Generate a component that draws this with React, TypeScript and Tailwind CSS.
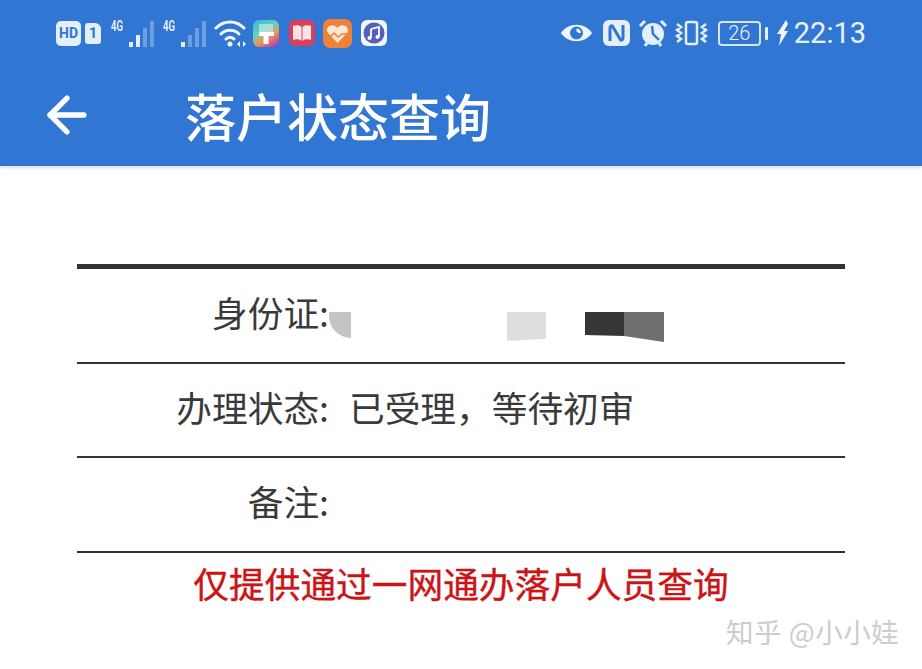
import { ArrowLeft } from 'lucide-react';

const cjk = "font-['Noto_Sans_CJK_SC','Noto_Sans',sans-serif]";

function SignalBars({ lit }: { lit: number }) {
  const heights = [5, 12, 19, 26];
  return (
    <div className="flex items-end gap-[3px] h-[26px]">
      {heights.map((h, i) => (
        <div
          key={i}
          className={i < lit ? 'w-[4px] bg-[#e3effb]' : 'w-[4px] bg-[#6d9fe0]'}
          style={{ height: h }}
        />
      ))}
    </div>
  );
}

function Signal({ lit }: { lit: number }) {
  return (
    <div className="w-[43px] h-[27px] flex items-end justify-between">
      <span className="self-start w-[15px] text-[14px] leading-[13px] font-bold text-[#e3effb] font-['Roboto',sans-serif] scale-x-[0.7] origin-left whitespace-nowrap">4G</span>
      <SignalBars lit={lit} />
    </div>
  );
}

function StatusLeft() {
  return (
    <div className="flex items-center">
      <div className="w-[25px] h-[25px] rounded-[5px] bg-[#e3effb] text-[#3176d2] text-[14px] leading-[25px] text-center font-bold font-['Roboto',sans-serif]">HD</div>
      <div className="ml-[4px] w-[16px] h-[21px] rounded-[3px] rounded-tr-[6px] bg-[#e3effb] text-[#3176d2] text-[15px] leading-[21px] text-center font-bold font-['Roboto',sans-serif]">1</div>
      <div className="ml-[10px]"><Signal lit={2} /></div>
      <div className="ml-[9px]"><Signal lit={1} /></div>
      <svg className="ml-[8px]" width="34" height="28" viewBox="0 0 34 28" fill="none" stroke="#eef5fc" strokeWidth="3" strokeLinecap="round">
        <path d="M2 9c8-8 20-8 28 0" />
        <path d="M7 15c5-5 13-5 18 0" />
        <path d="M12 20c2.500-2 5.500-2 8 0" />
        <circle cx="16" cy="25" r="2.500" fill="#eef5fc" stroke="none" />
        <path d="M26 22l-3 3 3 3zM29 22l3 3-3 3z" fill="#eef5fc" stroke="none" />
      </svg>
      {/* brush app */}
      <svg className="ml-[5px]" width="26" height="27" viewBox="0 0 26 27">
        <defs>
          <linearGradient id="brush" x1="0.2" y1="0" x2="0.8" y2="1">
            <stop offset="0" stopColor="#3fb8e0" />
            <stop offset="0.4" stopColor="#6fd0b0" />
            <stop offset="0.65" stopColor="#f0954c" />
            <stop offset="1" stopColor="#b33bc0" />
          </linearGradient>
        </defs>
        <rect width="26" height="27" rx="6" fill="url(#brush)" />
        <path d="M6 4h14v10H6z" fill="#dff3f7" opacity="0.55" />
        <path d="M6 12h15v4h-5.500v8h-5v-8H6z" fill="#fff" />
      </svg>
      {/* book app */}
      <svg className="ml-[10px]" width="26" height="26" viewBox="0 0 26 26">
        <rect width="26" height="26" rx="6" fill="#d8405c" />
        <path d="M4 6c3-1 7-1 8.500 1v14C11 19 7 19 4 20zM22 6c-3-1-7-1-8.500 1v14c1.500-2 5.500-2 8.500-1z" fill="#fbe3e6" />
      </svg>
      {/* health app */}
      <svg className="ml-[8px]" width="29" height="29" viewBox="0 0 29 29">
        <rect width="29" height="29" rx="7" fill="#ee8238" />
        <path d="M14.500 24L5 14c-4-6 5-11 9.500-5 4.500-6 13.500-1 9.500 5z" fill="#fde8d4" />
        <path d="M0 17h8l3-3 4 4 4-3h10" fill="none" stroke="#ee8238" strokeWidth="1.500" />
      </svg>
      {/* music app */}
      <svg className="ml-[9px]" width="26" height="26" viewBox="0 0 26 26">
        <rect width="26" height="26" rx="6" fill="#f2f5fb" />
        <circle cx="13" cy="13" r="10.500" fill="#5560bd" />
        <path d="M10 9l8-2v10" fill="none" stroke="#fff" strokeWidth="1.800" />
        <path d="M10 9v9" fill="none" stroke="#fff" strokeWidth="1.800" />
        <circle cx="8.500" cy="18" r="2" fill="#fff" />
        <circle cx="16.500" cy="17" r="2" fill="#fff" />
      </svg>
    </div>
  );
}

function StatusRight() {
  return (
    <div className="flex items-center">
      <svg width="33" height="22" viewBox="0 0 33 22">
        <path d="M1 11C8 0 25 0 32 11 25 22 8 22 1 11z" fill="#eef5fc" />
        <circle cx="16.500" cy="11" r="6.500" fill="#3176d2" />
        <path d="M16.500 6.500a4.500 4.500 0 0 1 4.500 4.500h-3a1.500 1.500 0 0 0-1.500-1.500z" fill="#eef5fc" />
      </svg>
      <svg className="ml-[10px]" width="27" height="26" viewBox="0 0 27 26">
        <rect width="27" height="26" rx="6" fill="#e3effb" />
        <path d="M7 21V8c0-2 2-3 3-1l7 12c1 2 3 1 3-1V5" fill="none" stroke="#3176d2" strokeWidth="3" />
      </svg>
      <svg className="ml-[8px]" width="30" height="30" viewBox="0 0 30 30">
        <circle cx="15" cy="16" r="11" fill="#e3effb" />
        <path d="M14 8l1 8 6 6" fill="none" stroke="#3176d2" strokeWidth="2.400" />
        <path d="M2 8l5-5M28 8l-5-5M7 28l2-3M23 28l-2-3" fill="none" stroke="#e3effb" strokeWidth="3" />
      </svg>
      <svg className="ml-[7px]" width="33" height="26" viewBox="0 0 33 26" fill="none" stroke="#e3effb">
        <rect x="11" y="2" width="11" height="22" rx="2" strokeWidth="2.500" />
        <path d="M2 4l4 3-4 3 4 3-4 3 4 3-4 3M31 4l-4 3 4 3-4 3 4 3-4 3 4 3" strokeWidth="2.500" />
      </svg>
      <div className="ml-[10px] flex items-center">
        <div className="w-[43px] h-[25px] rounded-[4px] border-2 border-[#d6e6f8] text-[#eef5fc] text-[20px] leading-[21px] text-center font-['Roboto',sans-serif] font-light">26</div>
        <div className="ml-[4px] w-[3px] h-[13px] rounded-[1px] bg-[#e3effb]" />
      </div>
      <svg className="ml-[8px]" width="13" height="26" viewBox="0 0 13 26">
        <path d="M10 0L1 14h4L3 26l9-15H8l4-7z" fill="#eef5fc" />
      </svg>
      <span className="ml-[5px] text-[29px] leading-[30px] text-[#e8f1fb] font-['Roboto',sans-serif]">22:13</span>
    </div>
  );
}

function Row({ label, value }: { label: string; value?: string }) {
  return (
    <div className="flex h-[94.5px] border-b-2 border-[#333] items-center pb-[6px]">
      <div className="w-[252px] text-right text-[35.700px] leading-none text-[#3a3a3a]">{label}:</div>
      {value && <div className="ml-[20px] text-[35.700px] leading-none text-[#3a3a3a]">{value}</div>}
    </div>
  );
}

export default function App() {
  return (
    <div className={`w-[922px] h-[669px] bg-white overflow-hidden relative ${cjk}`}>
      <header className="h-[166px] bg-[#3176d2] shadow-[0_1px_4px_rgba(0,0,0,0.2)]">
        <div className="h-[66px] pl-[56px] pr-[56px] flex items-center justify-between">
          <StatusLeft />
          <StatusRight />
        </div>
        <div className="h-[100px] flex items-center pb-[2px]">
          <ArrowLeft className="ml-[38px] text-white" size={58} strokeWidth={2.200} />
          <h1 className="ml-[89px] text-[51px] leading-none font-medium text-white">落户状态查询</h1>
        </div>
      </header>

      <main className="mt-[98px] mx-[77px] border-t-[5px] border-[#333]">
        <Row label="身份证" />
        <Row label="办理状态" value="已受理，等待初审" />
        <Row label="备注" />
        <p className="mt-[6px] text-center text-[35.700px] leading-[48px] font-normal text-[#cc1417] [-webkit-text-stroke:0.4px_#cc1417]">
          仅提供通过一网通办落户人员查询
        </p>
      </main>

      {/* redacted ID number patches */}
      <div className="absolute left-[329px] top-[312px] w-[22px] h-[26px] bg-[#c4c4c4] rounded-bl-[22px] blur-[0.5px]" />
      <div className="absolute left-[507px] top-[312px] w-[39px] h-[29px] bg-[#dedede] blur-[0.5px] [clip-path:polygon(0_0,100%_0,100%_92%,0_100%)]" />
      <div className="absolute left-[585px] top-[312px] w-[39px] h-[24px] bg-[#363636] blur-[0.5px] [clip-path:polygon(0_0,100%_0,100%_100%,0_96%)]" />
      <div className="absolute left-[624px] top-[312px] w-[40px] h-[30px] bg-[#6e6e6e] blur-[0.5px] [clip-path:polygon(0_0,100%_0,100%_100%,0_80%)]" />

      {/* watermark */}
      <div className="absolute left-[726px] top-[613px] text-[27.500px] leading-[36px] tracking-[0.5px] text-[#cdcdcd]">知乎 @小小娃</div>
    </div>
  );
}
